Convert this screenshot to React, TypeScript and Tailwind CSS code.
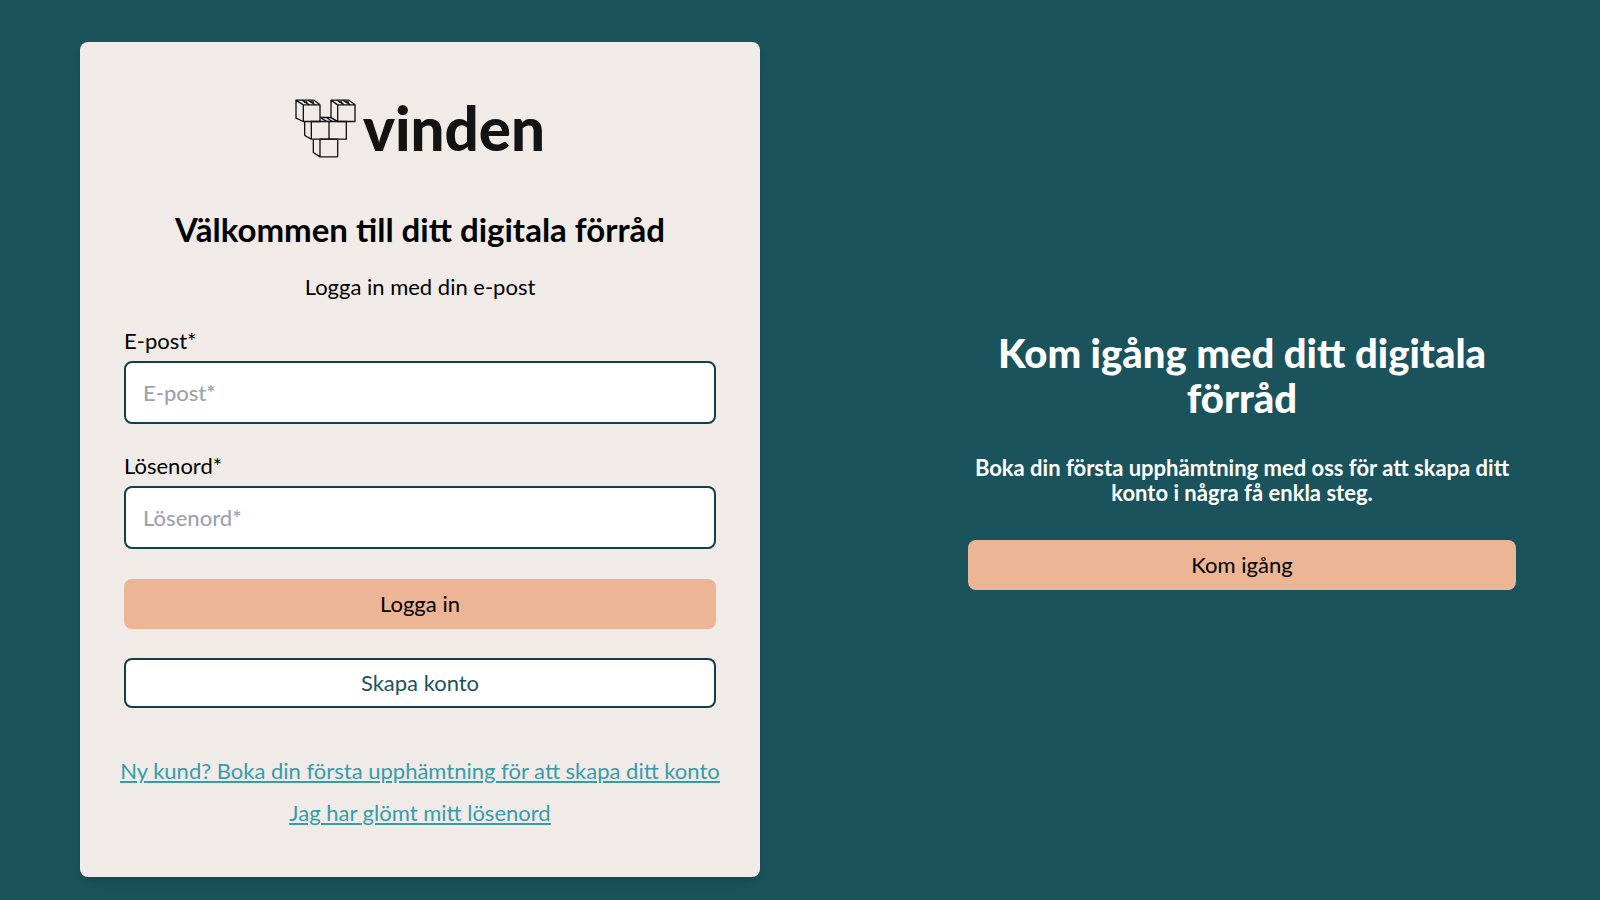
import { useState } from "react";
import type { InputHTMLAttributes } from "react";

const buttonBase = "h-[50px] w-full cursor-pointer rounded-lg text-[22px] leading-6";

function Logo() {
  return (
    <div className="flex h-[60px] items-center justify-center gap-[7px] text-[#131313]">
      <svg viewBox="0 0 183 176" className="h-[59px] w-[61px]" fill="none" stroke="currentColor" strokeWidth="4" strokeLinejoin="round" aria-hidden="true">
        {/* top row */}
        <path d="M3 3h54l18 14v50H25V17L3 3v54l22 10M25 17h50" />
        <path d="M108 3h54l18 14v50h-52V17L108 3v52l20 12M128 17h52" />
        <path d="M21 3l22 14M39 3l22 14M126 3l22 14M144 3l22 14" />
        <path d="M27 9h10M47 9h10M132 9h10M152 9h10" strokeWidth="5" />
        {/* middle row */}
        <path d="M75 55h32l20 12M78 57l18 10M94 55l18 12" />
        <path d="M29 67v42l20 11V67h105v53H49M102 67v53" />
        {/* bottom row */}
        <path d="M55 120v40l20 13v-53h53v53H75" />
      </svg>
      <span className="text-[60px] leading-[60px] font-black">vinden</span>
    </div>
  );
}

type FieldProps = InputHTMLAttributes<HTMLInputElement> & { id: string; label: string };

function Field({ id, label, ...rest }: FieldProps) {
  return (
    <div className="flex flex-col gap-2">
      <label htmlFor={id} className="text-[22px] leading-6">
        {label}
      </label>
      <input
        id={id}
        placeholder={label}
        className="h-[63px] w-full rounded-lg border-2 border-[#123f4a] bg-white px-[17px] text-[22px] font-medium placeholder:text-[#9ca3af]"
        {...rest}
      />
    </div>
  );
}

export default function App() {
  const [email, setEmail] = useState("");
  const [password, setPassword] = useState("");

  return (
    <main className="grid min-h-screen grid-cols-[840fr_716fr] items-center gap-x-11 bg-[#1b535c] font-['Lato','Open_Sans',sans-serif] text-black">
      <section className="min-w-0 pt-[42px] pr-20 pb-[23px] pl-20">
        <div className="rounded-lg bg-[#f0ebe7] px-11 pt-14 pb-[50px] shadow-lg">
          <Logo />
          <h1 className="mt-[51px] text-center text-[33px] leading-10 font-bold">Välkommen till ditt digitala förråd</h1>
          <p className="mt-6 text-center text-[22px] leading-7">Logga in med din e-post</p>

          <form onSubmit={(e) => e.preventDefault()} className="mt-7 flex flex-col">
            <div className="flex flex-col gap-[30px]">
              <Field id="email" type="email" label="E-post*" value={email} onChange={(e) => setEmail(e.target.value)} />
              <Field id="password" type="password" label="Lösenord*" value={password} onChange={(e) => setPassword(e.target.value)} />
            </div>
            <button type="submit" className={`${buttonBase} mt-[30px] bg-[#ebb596]`}>
              Logga in
            </button>
            <button type="button" className={`${buttonBase} mt-[29px] border-2 border-[#123f4a] bg-white text-[#1b535c]`}>
              Skapa konto
            </button>
          </form>

          <nav className="-mx-2 mt-[49px] flex flex-col items-center gap-[14px] text-center text-[22px] leading-7 text-[#369cac] underline">
            <a href="#boka">Ny kund? Boka din första upphämtning för att skapa ditt konto</a>
            <a href="#losenord">Jag har glömt mitt lösenord</a>
          </nav>
        </div>
      </section>

      <section className="min-w-0 px-[84px] pt-[21px] text-center text-white">
        <h2 className="text-[40px] leading-[45px] font-black">Kom igång med ditt digitala förråd</h2>
        <p className="mt-[34px] text-[22px] leading-[25px] font-bold">
          Boka din första upphämtning med oss för att skapa ditt konto i några få enkla steg.
        </p>
        <button type="button" className={`${buttonBase} mt-[35px] bg-[#ebb596] text-black`}>
          Kom igång
        </button>
      </section>
    </main>
  );
}
